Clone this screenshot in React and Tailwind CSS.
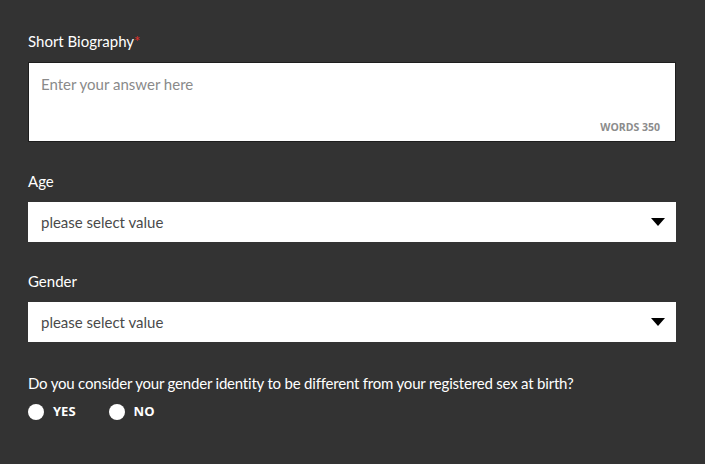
import { useState } from "react";

function Caret() {
  return (
    <svg width="14" height="8" viewBox="0 0 14 8" className="shrink-0">
      <path d="M0 0h14L7 8z" fill="#000" />
    </svg>
  );
}

function SelectBox({ value }) {
  return (
    <div className="flex h-10 items-center justify-between bg-white pl-[13px] pr-[11px] text-[15px] text-[#4a4a4a]">
      <span>{value}</span>
      <Caret />
    </div>
  );
}

export default function App() {
  const [answer, setAnswer] = useState(null);

  return (
    <div
      className="min-h-screen w-full bg-[#333333] pl-7 pr-[29px] pt-[31px] text-white"
      style={{ fontFamily: '"Lato", "Noto Sans", sans-serif' }}
    >
      <label className="block text-[15px] leading-5">
        Short Biography<span className="text-[#e0302a]">*</span>
      </label>
      <div className="relative mt-[11px] h-[80px] border border-[#1e1e1e] bg-white">
        <div className="px-[12px] pt-[10px] text-[15px] text-[#8a8a8a]">Enter your answer here</div>
        <div
          className="absolute bottom-[5px] right-[15px] text-[10.5px] font-bold text-[#8c8c8c]"
          style={{ fontFamily: '"Open Sans", sans-serif' }}
        >
          WORDS 350
        </div>
      </div>

      <label className="mt-[29px] block text-[15px] leading-5">Age</label>
      <div className="mt-[11px]">
        <SelectBox value="please select value" />
      </div>

      <label className="mt-[29px] block text-[15px] leading-5">Gender</label>
      <div className="mt-[11px]">
        <SelectBox value="please select value" />
      </div>

      <p className="mt-[31px] text-[15px] leading-5 tracking-[-0.2px]">
        Do you consider your gender identity to be different from your registered sex at birth?
      </p>
      <div
        className="mt-[9px] flex items-center text-[13px] font-bold"
        style={{ fontFamily: '"Open Sans", sans-serif' }}
      >
        {["YES", "NO"].map((opt, i) => (
          <button
            key={opt}
            onClick={() => setAnswer(opt)}
            className={`flex items-center gap-[9px] ${i === 1 ? "ml-[33px]" : ""}`}
          >
            <span className="flex h-4 w-4 items-center justify-center rounded-full bg-white">
              {answer === opt && <span className="h-2 w-2 rounded-full bg-[#333333]" />}
            </span>
            <span>{opt}</span>
          </button>
        ))}
      </div>
    </div>
  );
}
